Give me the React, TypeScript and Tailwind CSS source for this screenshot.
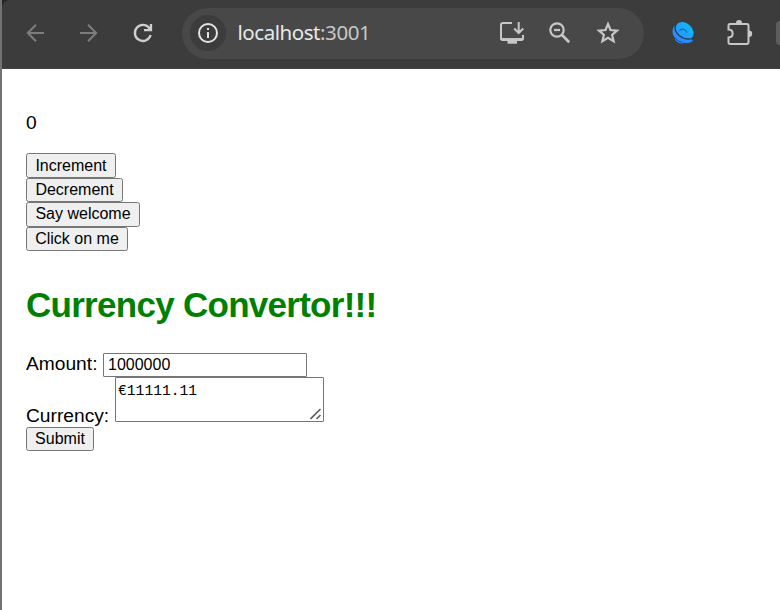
import React from "react";

function PushButton({ label, size }: { label: string; size: string }) {
  return (
    <button className={`block rounded-[2.5px] border border-[#767676] bg-[#efefef] text-center text-[16px] whitespace-nowrap text-black ${size}`}>
      {label}
    </button>
  );
}

function Toolbar() {
  return (
    <header className="flex h-[69px] items-center rounded-tl-[8px] border-b border-[#474346] bg-[#3c3c3c] pb-[2px]">
      <svg className="ml-[22px] h-6 w-6 shrink-0" viewBox="0 0 24 24" fill="none" stroke="#7d7d7d" strokeWidth="2">
        <path d="M20 12H4M12 3.8 3.8 12l8.2 8.2" />
      </svg>
      <svg className="ml-[30px] h-6 w-6 shrink-0" viewBox="0 0 24 24" fill="none" stroke="#7d7d7d" strokeWidth="2">
        <path d="M2 12h16M10 3.8l8.2 8.2-8.2 8.2" />
      </svg>
      <svg className="ml-[29px] h-6 w-6 shrink-0" viewBox="0 0 24 24" fill="none" stroke="#cfcfcf" strokeWidth="2.3">
        <path d="M19.6 14a8 8 0 1 1-1.6-7.2l1.5 2M20 3v6.2h-7" />
      </svg>
      <div className="ml-[27px] flex h-[51px] w-[462px] shrink-0 items-center rounded-full bg-[#484848]">
        <div className="ml-[8px] flex h-9 w-9 items-center justify-center rounded-full bg-[#3c3c3c]">
          <svg className="h-5 w-5" viewBox="0 0 20 20" fill="none" stroke="#e3e3e3" strokeWidth="2">
            <circle cx="10" cy="10" r="9" />
            <path d="M10 9v6M10 5v2" />
          </svg>
        </div>
        <div className="ml-[11.5px] w-[134.5px] pb-[2px] font-['Noto_Sans','Open_Sans',sans-serif] text-[20.5px] leading-6 tracking-[-0.45px] whitespace-nowrap text-[#e8e8e8]">
          localhost<span className="text-[#c7c7c7]">:3001</span>
        </div>
        <svg className="ml-[127px] h-[26px] w-[26px] shrink-0" viewBox="0 0 26 26" fill="none" stroke="#c7c7c7" strokeWidth="2">
          <path d="M13 3H4a2 2 0 0 0-2 2v13a2 2 0 0 0 2 2h18a2 2 0 0 0 2-2v-3M19.7 2v11M15.2 8.5l4.5 4.5 4.5-4.5" />
          <path d="M2 18.6h22v1.4H2z" strokeWidth="1" fill="#c7c7c7" />
          <path d="M8.5 20h9.5v3.7H8.500z" fill="#c7c7c7" stroke="none" />
        </svg>
        <svg className="ml-[23px] h-6 w-6 shrink-0" viewBox="0 0 24 24" fill="none" stroke="#c7c7c7" strokeWidth="2.2">
          <circle cx="9" cy="9" r="6.7" />
          <path d="M6 9h6" />
          <path d="m13.8 13.8 7.4 7.4" strokeWidth="2.7" />
        </svg>
        <svg className="ml-[24px] h-6 w-6 shrink-0" viewBox="0 0 24 24" fill="none" stroke="#c7c7c7" strokeWidth="2.2">
          <path d="m12 3 2.5 6 6.5.6-4.9 4.2 1.5 6.4-5.6-3.4-5.6 3.4 1.5-6.4L3 9.6 9.5 9z" />
        </svg>
      </div>
      <svg className="ml-[27px] h-6 w-6 shrink-0" viewBox="0 0 24 24">
        <defs>
          <linearGradient id="dish" x1="0" y1="0" x2="0" y2="1">
            <stop stopColor="#09b9fc" />
            <stop offset="1" stopColor="#2b95fb" />
          </linearGradient>
        </defs>
        <path d="M3.5 4.5C.8 8 1 13 3.5 16L4 18.500c2 3 5 4.500 7.500 4l1-1c3 1.200 7 .7 9.500-2Z" fill="#2b8cfa" />
        <path d="M3.600 16.200C5.500 19 8 20.800 11 21.300" fill="none" stroke="#294a70" strokeWidth="1" />
        <ellipse cx="13.600" cy="9.800" rx="10" ry="7.600" transform="rotate(42 13.6 9.8)" fill="url(#dish)" />
        <path d="M4.400 4.200C2.400 12 11.500 20.300 22 17.300" fill="none" stroke="#23435e" strokeWidth="1.400" />
        <path d="M8.500 9.800c2.400-3 6.600-1.500 7.500 2" fill="none" stroke="#176da6" strokeWidth="1.200" />
      </svg>
      <svg className="mb-[2px] ml-[31px] h-[27px] w-[27px] shrink-0" viewBox="0 0 27 27" fill="none" stroke="#c7c7c7" strokeWidth="2">
        <path d="M4 5h17a1.5 1.5 0 0 1 1.5 1.5v17A1.5 1.5 0 0 1 21 25H4a1.5 1.5 0 0 1-1.5-1.5v-5c5.5-.2 5.5-7.8 0-8v-4A1.5 1.5 0 0 1 4 5Z" />
        <path d="M10 4a3 3 0 0 1 6 0v1h-6zM23 11.5a3.2 3.2 0 0 1 0 6.4z" fill="#c7c7c7" stroke="none" />
      </svg>
      <div className="ml-[23px] h-6 w-[4px] shrink-0 rounded-l-full bg-[#5d5d5d]" />
    </header>
  );
}

export default function App() {
  return (
    <div className="h-[610px] w-[780px] overflow-hidden bg-[#202724] font-['Liberation_Sans',Arial,sans-serif]">
      <div className="h-full border-l-2 border-[#737373]">
        <Toolbar />
        <main className="h-[541px] bg-white pt-[43px] pl-[24px] text-black">
          <p className="text-[19.2px] leading-[22px]">0</p>
          <div className="mt-[19px] flex flex-col items-start">
            <PushButton label="Increment" size="h-[25px] w-[90px] leading-[22px]" />
            <PushButton label="Decrement" size="h-6 w-[97px] leading-[22px]" />
            <PushButton label="Say welcome" size="h-[25px] w-[114px] pb-[2px] leading-[21px]" />
            <PushButton label="Click on me" size="h-6 w-[102px] leading-[22px]" />
          </div>
          <h1 className="mt-[34px] text-[35px] leading-10 font-bold tracking-[-0.72px] whitespace-nowrap text-[#008000]">Currency Convertor!!!</h1>
          <form className="mt-[28px]" onSubmit={(event) => event.preventDefault()}>
            <div className="flex h-6 items-start">
              <label htmlFor="amount" className="w-[77px] text-[19.2px] leading-[22px]">Amount:</label>
              <input id="amount" defaultValue="1000000" className="h-6 w-[204px] rounded-[1px] border border-[#767676] bg-white px-[4px] text-[16px] leading-[22px] outline-none" />
            </div>
            <div className="flex h-[50px] items-start">
              <label htmlFor="currency" className="mt-[28px] w-[89px] text-[19.2px] leading-[22px]">Currency:</label>
              <div className="flex h-[45px] w-[209px] items-end rounded-[1px] border border-[#767676] bg-white">
                <textarea id="currency" defaultValue="€11111.11" className="h-[43px] w-[193px] resize-none bg-transparent px-[2px] pt-[4px] font-['Liberation_Mono',monospace] text-[14.67px] leading-[19px] outline-none" />
                <svg className="mb-[1px] ml-[1px] h-3 w-3" viewBox="0 0 12 12" stroke="#5c5c5c" strokeWidth="1.6">
                  <path d="M.5 11 10.5 1M6.5 11l4-4" />
                </svg>
              </div>
            </div>
            <PushButton label="Submit" size="h-6 w-[68px] leading-[22px]" />
          </form>
        </main>
      </div>
    </div>
  );
}
